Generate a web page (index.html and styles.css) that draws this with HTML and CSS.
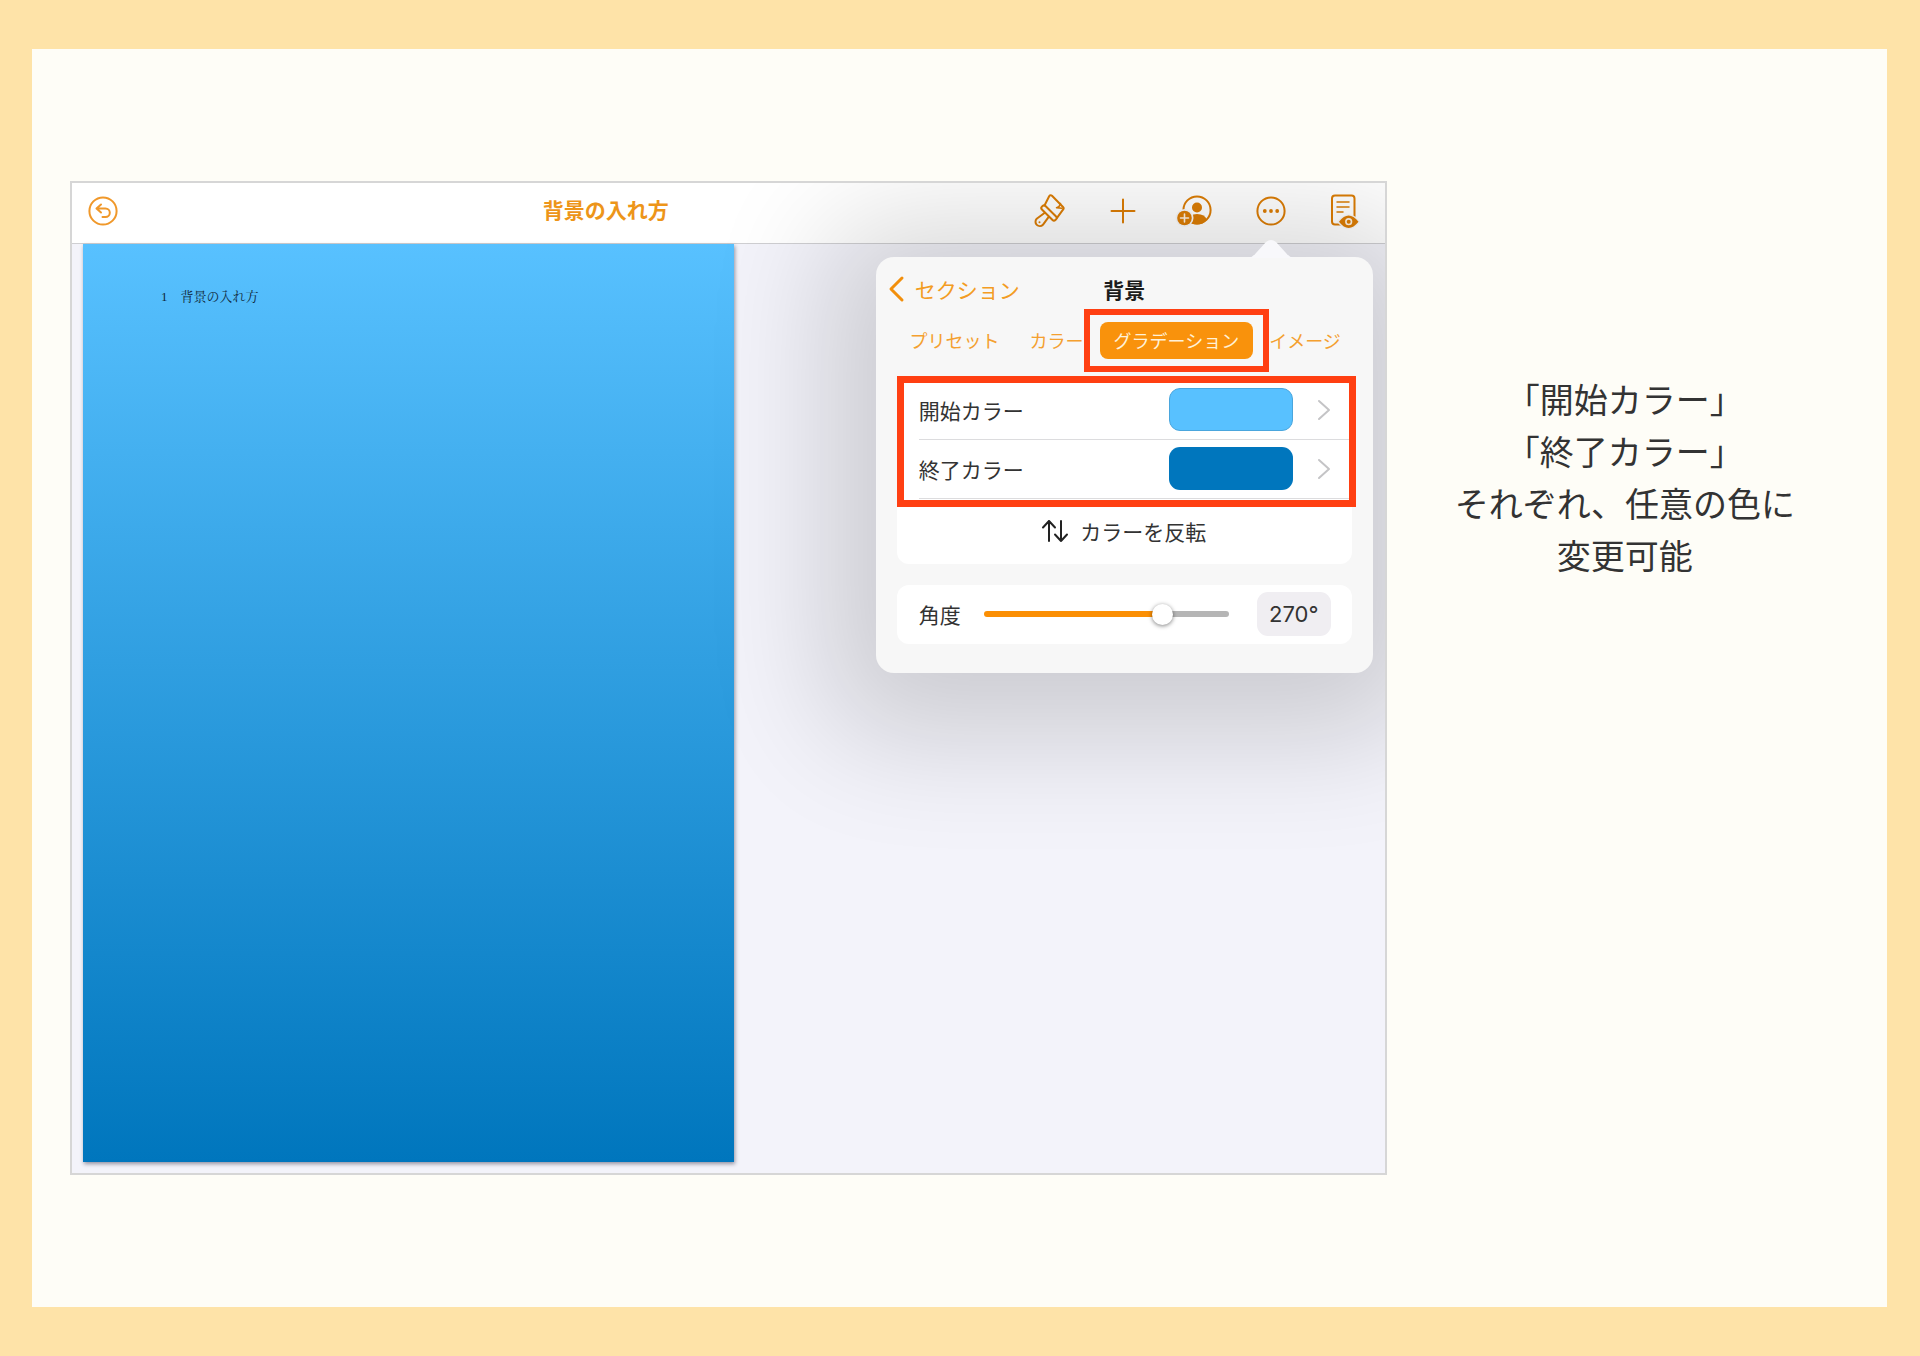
FILE: index.html
```html
<!DOCTYPE html>
<html lang="ja">
<head>
  <meta charset="UTF-8">
  <meta name="viewport" content="width=device-width, initial-scale=1.0">
  <title>背景の入れ方</title>
  <link rel="stylesheet" href="styles.css">
</head>
<body>
  <main class="slide">
    <section class="window">
      <header class="toolbar">
        <button class="icon-btn undo" aria-label="取り消す">
          <svg viewBox="0 0 36 36"><circle cx="18" cy="18" r="13.6"/><path d="M16 11.5l-4.5 4 4.5 4M12 15.5h8.5a4.3 4.3 0 0 1 0 8.6h-3"/></svg>
        </button>
        <h1>背景の入れ方</h1>
        <div class="tools">
          <button class="icon-btn" aria-label="フォーマット">
            <svg viewBox="0 0 36 36">
              <path d="M13.5 12.5l4.8-9.5q1.2-1.6 2.7-.2l11 11.2q1.3 1.3 0 2.7L26 24.8"/>
              <path d="M29.5 10.5q-.8 3.5-4 4.2l5.5.6" class="fine"/>
              <rect x="8.5" y="17.5" width="19" height="5" rx="2" transform="rotate(45 18 20)"/>
              <path d="M13.8 19.8L5.7 25.8a4.3 4.3 0 1 0 6.2 6L17.5 24.2"/>
              <circle cx="8.500" cy="29.3" r="1" class="fill"/>
            </svg>
          </button>
          <button class="icon-btn" aria-label="追加">
            <svg viewBox="0 0 36 36"><path d="M18 6.5v23M6.5 18h23"/></svg>
          </button>
          <button class="icon-btn" aria-label="共同制作">
            <svg viewBox="0 0 36 36">
              <circle cx="18" cy="17" r="13.6"/>
              <circle cx="18" cy="14.5" r="5" class="fill"/>
              <path d="M9 27.5q1-6.500 9-6.500t10 6q-4.500 4.500-10 4.500t-9-4z" class="fill"/>
              <circle cx="5.500" cy="25" r="9" class="gap"/>
              <circle cx="5.500" cy="25" r="7.300" class="fill"/>
              <path d="M5.500 21v8M1.500 25h8" class="light"/>
            </svg>
          </button>
          <button class="icon-btn" aria-label="その他">
            <svg viewBox="0 0 36 36">
              <circle cx="18" cy="18" r="13.6"/>
              <circle cx="11.8" cy="18" r="1.9" class="fill"/><circle cx="18" cy="18" r="1.9" class="fill"/><circle cx="24.2" cy="18" r="1.9" class="fill"/>
            </svg>
          </button>
          <button class="icon-btn" aria-label="表示">
            <svg viewBox="0 0 36 36">
              <rect x="5" y="2.5" width="22.5" height="29" rx="3"/>
              <path d="M10 9h12M10 14h12M10 19h6" class="fine"/>
              <path d="M10 28.7q11.500-15 23.500 0q-12 15-23.500 0z" class="gap"/>
              <path d="M12 28.7q9.500-12.500 19.500 0q-10 12.500-19.500 0z" class="fill"/>
              <circle cx="21.7" cy="28.7" r="2.8" class="light"/>
            </svg>
          </button>
        </div>
      </header>

      <article class="page">
        <p><span>1</span>背景の入れ方</p>
      </article>

      <aside class="popover">
        <svg class="arrow" viewBox="0 0 46 18"><path d="M0 18q5-1 8-5l10-11q5-4 10 0l10 11q3 4 8 5z"/></svg>
        <div class="popover-head">
          <a href="#section">
            <svg viewBox="0 0 16 26"><path d="M14 2L3 13l11 11"/></svg>セクション
          </a>
          <h2>背景</h2>
        </div>

        <nav class="tabs">
          <button>プリセット</button>
          <button>カラー</button>
          <button class="selected">グラデーション</button>
          <button>イメージ</button>
        </nav>

        <div class="card">
          <div class="colors">
            <button class="row">開始カラー
              <span class="swatch start"></span>
              <svg class="chevron" viewBox="0 0 12 20"><path d="M1 1l10 9-10 9"/></svg>
            </button>
            <button class="row">終了カラー
              <span class="swatch end"></span>
              <svg class="chevron" viewBox="0 0 12 20"><path d="M1 1l10 9-10 9"/></svg>
            </button>
          </div>
          <button class="reverse">
            <svg viewBox="0 0 26 22"><path d="M7 21V1M1 7.5l6-6.5 6 6.5M19 1v20M13 14.5l6 6.5 6-6.5"/></svg>
            カラーを反転
          </button>
        </div>

        <div class="card angle">
          <label for="angle">角度</label>
          <input type="range" id="angle" min="0" max="360" value="270">
          <input type="text" class="angle-value" value="270°" aria-label="角度の値">
        </div>
      </aside>
    </section>

    <p class="caption">「開始カラー」<br>「終了カラー」<br>それぞれ、任意の色に<br>変更可能</p>
  </main>
</body>
</html>
```
FILE: styles.css
```css
* {
  box-sizing: border-box;
}
body {
  margin: 0;
  min-height: 100vh;
  display: flex;
  padding: 49px 33px 49px 32px;
  background: #fee3a8;
  color: #333;
  font-family: Inter, 'Noto Sans CJK JP', sans-serif;
}
h1, h2, p {
  margin: 0;
}
button, input {
  font: inherit;
  color: inherit;
  background: none;
  border: 0;
  padding: 0;
}
svg {
  display: block;
  overflow: visible;
  fill: none;
  stroke: currentColor;
  stroke-width: 2;
  stroke-linecap: round;
  stroke-linejoin: round;
}

.slide {
  flex: 1;
  display: grid;
  grid-template-columns: 47fr 17fr;
  align-items: center;
  padding: 0 24px 0 38px;
  background: #fefdf7;
}
.window {
  position: relative;
  overflow: hidden;
  border: 2px solid #d6d6d6;
  background: #f3f3fa;
}

/* toolbar */
.toolbar {
  display: flex;
  align-items: center;
  height: 61px;
  padding: 0 22px 4px 13px;
  background: #fff;
  border-bottom: 1px solid #cfcfd2;
  color: #dc7d05;
}
.toolbar h1 {
  flex: 1;
  padding-left: 60px;
  text-align: center;
  font-size: 21px;
  line-height: 30px;
  font-weight: bold;
  color: #ed9519;
}
.tools {
  display: flex;
  gap: 38px;
}
.icon-btn {
  width: 36px;
  height: 36px;
}
.undo {
  color: #f0982a;
}
.icon-btn .fill {
  fill: currentColor;
  stroke: none;
}
.icon-btn .fine {
  stroke-width: 1.5;
}
.icon-btn .gap {
  fill: #f8f8f9;
  stroke: none;
}
.icon-btn .light {
  stroke: #fdf0e0;
  stroke-width: 1.6;
}

/* document */
.page {
  width: 49.6%;
  aspect-ratio: 651 / 918;
  margin: 0 0 11px 11px;
  padding: 43px 78px;
  background: linear-gradient(#58c1ff, #0076bd);
  box-shadow: 1px 2px 4px rgba(0, 0, 30, 0.4);
}
.page p {
  font-family: 'Liberation Serif', 'Noto Serif CJK JP', 'Noto Sans CJK JP', serif;
  font-size: 13px;
  line-height: 20px;
  color: #10293b;
}
.page span {
  margin-right: 13px;
}

/* popover */
.popover {
  position: absolute;
  top: 74px;
  right: 12px;
  width: 497px;
  padding: 13px 21px 29px;
  border-radius: 18px;
  background: #f7f7f7;
  box-shadow: 0 14px 120px 50px rgba(0, 0, 0, 0.16);
}
.arrow {
  position: absolute;
  top: -17px;
  right: 79px;
  width: 46px;
  fill: #f8f8fb;
  stroke: none;
}
.popover-head {
  display: grid;
  grid-template-columns: 1fr auto 1fr;
  align-items: center;
  height: 38px;
  font-size: 21px;
}
.popover-head a {
  display: flex;
  align-items: center;
  gap: 11px;
  margin-left: -9px;
  color: #f39c23;
  text-decoration: none;
}
.popover-head svg {
  width: 16px;
  color: #f28f0c;
  stroke-width: 3;
}
.popover-head h2 {
  font-size: 21px;
  color: #1c1c1c;
}
.tabs {
  display: flex;
  justify-content: center;
  gap: 2px;
  margin: 14px -6px 22px -4px;
}
.tabs button {
  position: relative;
  flex: none;
  height: 37px;
  padding: 0 14px;
  border-radius: 8px;
  font-size: 18px;
  color: #f4a02f;
}
.tabs .selected {
  background: #f9920c;
  color: #fff1d8;
}
.tabs .selected::after {
  content: '';
  position: absolute;
  z-index: 1;
  inset: -13px -16px;
  border: 6px solid #ff3f12;
}
.card {
  border-radius: 12px;
  background: #fff;
  font-size: 21px;
}
.colors {
  position: relative;
}
.colors::after {
  content: '';
  position: absolute;
  inset: -5px -4px -8px 0;
  border: 7px solid #ff3f12;
  pointer-events: none;
}
.row {
  display: flex;
  align-items: center;
  width: calc(100% - 22px);
  height: 59px;
  margin-left: 22px;
  padding-right: 22px;
  border-bottom: 1px solid #dcdcde;
}
.swatch {
  width: 124px;
  height: 43px;
  margin-left: auto;
  margin-right: 25px;
  border-radius: 11px;
}
.start {
  background: #58c1ff;
  border: 1px solid #4aa6dd;
}
.end {
  background: #0076bd;
}
.chevron {
  width: 12px;
  color: #c4c4c6;
}
.reverse {
  display: flex;
  align-items: center;
  justify-content: center;
  gap: 12px;
  width: 100%;
  height: 65px;
}
.reverse svg {
  width: 26px;
  color: #222;
}
.angle {
  display: flex;
  align-items: center;
  height: 59px;
  margin-top: 21px;
  padding: 0 21px 0 22px;
}
#angle {
  appearance: none;
  flex: 1;
  min-width: 0;
  height: 6px;
  margin: 0 28px 0 23px;
  border-radius: 3px;
  background: linear-gradient(to right, #fb8f04 75%, #b5b5b5 75%);
}
#angle::-webkit-slider-thumb {
  appearance: none;
  width: 21px;
  height: 21px;
  border-radius: 50%;
  background: #fff;
  box-shadow: 0 1px 4px rgba(0, 0, 0, 0.5);
}
.angle-value {
  width: 74px;
  height: 44px;
  border-radius: 11px;
  background: #f0eef2;
  text-align: center;
  font-size: 22px;
}

/* explanation beside the screen */
.caption {
  align-self: start;
  margin-top: 326px;
  text-align: center;
  font-size: 34px;
  line-height: 52px;
}
```
